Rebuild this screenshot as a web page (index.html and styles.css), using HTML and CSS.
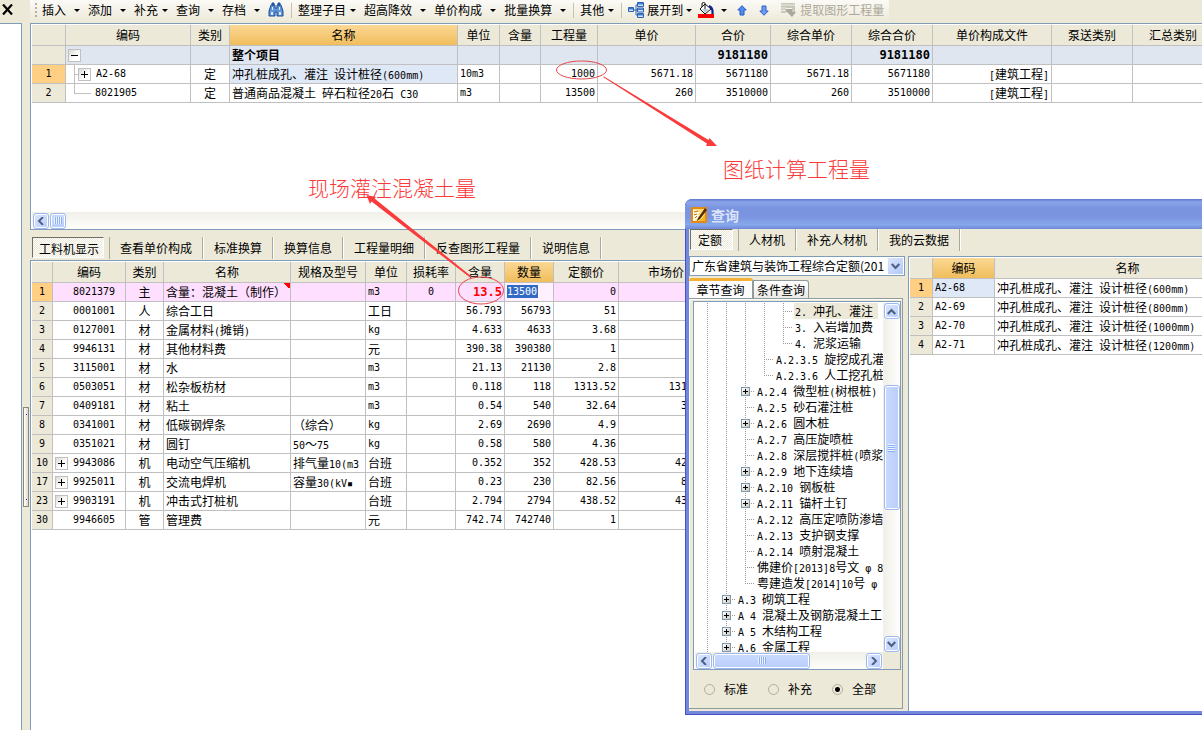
FILE: index.html
```html
<!DOCTYPE html>
<html lang="zh-CN">
<head>
<meta charset="utf-8">
<title>工程计价</title>
<link rel="stylesheet" href="styles.css">
</head>
<body>
<div class="app">
  <aside class="side">
    <div class="side-head"><button class="close" aria-label="关闭"><svg width="11" height="11" viewBox="0 0 11 11"><path d="M1 0.5L10 10.5M10 0.5L1 10.5" stroke="#000" stroke-width="2.2"/></svg></button></div>
    <div class="side-body"></div>
  </aside>
  <div class="splitter"><span class="handle"></span></div>
  <main class="main">
    <div class="toolbar">
      <span class="grip"></span>
      <button class="tb">插入<i class="caret"></i></button>
      <button class="tb">添加<i class="caret"></i></button>
      <button class="tb near">补充<i class="caret"></i></button>
      <button class="tb">查询<i class="caret"></i></button>
      <button class="tb">存档<i class="caret"></i></button>
      <button class="tb icon" aria-label="查找"><svg width="16" height="16" viewBox="0 0 16 16"><path d="M3 3h4v3h2V3h4l2 6v5h-6v-4H7v4H1V9z" fill="#5e93d8" stroke="#1b4f9c"/><path d="M4 1h2v2H4zM10 1h2v2h-2z" fill="#2c62b0" stroke="#1b4f9c"/><path d="M3 10h2v3H3zM11 10h2v3h-2zM4 5h1v3H4zM11 5h1v3h-1z" fill="#dcecff"/></svg></button>
      <span class="sep"></span>
      <button class="tb near">整理子目<i class="caret"></i></button>
      <button class="tb">超高降效<i class="caret"></i></button>
      <button class="tb">单价构成<i class="caret"></i></button>
      <button class="tb">批量换算<i class="caret"></i></button>
      <span class="sep"></span>
      <button class="tb near">其他<i class="caret"></i></button>
      <span class="sep"></span>
      <button class="tb near expand"><svg width="16" height="16" viewBox="0 0 16 16"><path d="M6 8h3M8 3v10M8 3h2M8 13h2M8 8h2" stroke="#3c6ab4" fill="none"/><path d="M.5 5.500h5v4h-5zM9.500.500h6v4h-6zM9.500 6h6v4h-6zM9.500 11.500h6v4h-6z" fill="#cfe2fb" stroke="#2f62b5"/><path d="M1 6h4v1.500H1zM10 1h5v1.500h-5zM10 6.500h5V8h-5zM10 12h5v1.500h-5z" fill="#3f7cd0"/></svg>展开到<i class="caret"></i></button>
      <button class="tb fill" aria-label="填充颜色"><svg width="16" height="16" viewBox="0 0 16 16"><path d="M0 12h16v4H0z" fill="#f00"/><path d="M7 2l6 5-6 5-5-5z" fill="#fff" stroke="#111"/><path d="M7 7V1.500q0-1-1.500-1T4 2v3" fill="none" stroke="#111"/><path d="M4 7h7l-4 4z" fill="#bcc7dc"/><path d="M11 4q4 1 3.500 8" fill="none" stroke="#0c1f9a" stroke-width="2.200"/></svg><i class="caret"></i></button>
      <button class="tb arrow" aria-label="上移"><svg width="10" height="11" viewBox="0 0 10 11"><path d="M5 .7L9.200 5H7v5H3V5H.8z" fill="#4f8df0" stroke="#2458c4"/></svg></button>
      <button class="tb arrow" aria-label="下移"><svg width="10" height="11" viewBox="0 0 10 11"><path d="M5 10.300L.8 6H3V1h4v5h2.200z" fill="#6b9cf2" stroke="#2e60c8"/></svg></button>
      <button class="tb extract" disabled><svg width="16" height="16" viewBox="0 0 16 16"><path d="M0 1h14v9h-3V6H5v5H0z" fill="#c9c7ba"/><path d="M0 3h14M0 6h5M0 8.500h5" stroke="#efede2"/><path d="M5 7h6v3h4l-4 5-5-5H5z" fill="#aaa89c"/></svg>提取图形工程量</button>
    </div>

    <section class="pane top">
      <div class="clip">
      <table class="grid t1">
        <colgroup><col class="c34"><col class="c125"><col class="c39"><col class="c228"><col class="c42"><col class="c41"><col class="c57"><col class="c98"><col class="c75"><col class="c81"><col class="c81"><col class="c119"><col class="c81"><col class="c81"></colgroup>
        <thead><tr><th></th><th>编码</th><th>类别</th><th class="hot">名称</th><th>单位</th><th>含量</th><th>工程量</th><th>单价</th><th>合价</th><th>综合单价</th><th>综合合价</th><th>单价构成文件</th><th>泵送类别</th><th>汇总类别</th></tr></thead>
        <tbody>
          <tr class="total"><th></th><td class="tree-cell"><button class="box minus" aria-label="折叠"></button></td><td></td><td>整个项目</td><td></td><td></td><td></td><td></td><td class="r big">9181180</td><td></td><td class="r big">9181180</td><td></td><td></td><td></td></tr>
          <tr><th class="hot n">1</th><td class="tree-cell"><span class="branch mid"></span><button class="box" aria-label="展开"></button><span class="n">A2-68</span></td><td class="c">定</td><td class="sel">冲孔桩成孔、灌注<span class="n">&nbsp;</span>设计桩径<span class="n">(600mm)</span></td><td class="n">10m3</td><td></td><td class="r n">1000</td><td class="r n">5671.18</td><td class="r n">5671180</td><td class="r n">5671.18</td><td class="r n">5671180</td><td class="r"><span class="n">[</span>建筑工程<span class="n">]</span></td><td></td><td></td></tr>
          <tr><th class="n">2</th><td class="tree-cell"><span class="branch end"></span><span class="n">8021905</span></td><td class="c">定</td><td>普通商品混凝土<span class="n">&nbsp;</span>碎石粒径<span class="n">20</span>石<span class="n">&nbsp;C30</span></td><td class="n">m3</td><td></td><td class="r n">13500</td><td class="r n">260</td><td class="r n">3510000</td><td class="r n">260</td><td class="r n">3510000</td><td class="r"><span class="n">[</span>建筑工程<span class="n">]</span></td><td></td><td></td></tr>
        </tbody>
      </table>
      </div>
      <div class="scroll-h"><button class="sb" aria-label="向左"><svg width="8" height="8" viewBox="0 0 8 8"><path d="M6 0L2 4l4 4" fill="none" stroke="#4d6185" stroke-width="2"/></svg></button><span class="thumb grips"></span></div>
    </section>

    <nav class="tabs">
      <button class="tab on">工料机显示</button><button class="tab">查看单价构成</button><button class="tab">标准换算</button><button class="tab">换算信息</button><button class="tab">工程量明细</button><button class="tab">反查图形工程量</button><button class="tab">说明信息</button>
    </nav>

    <section class="pane bottom">
      <table class="grid t2">
        <colgroup><col class="c21"><col class="c73"><col class="c38"><col class="c127"><col class="c75"><col class="c41"><col class="c49"><col class="c49"><col class="c49"><col class="c65"><col class="c95"></colgroup>
        <thead><tr><th></th><th>编码</th><th>类别</th><th>名称</th><th>规格及型号</th><th>单位</th><th>损耗率</th><th>含量</th><th class="hot">数量</th><th>定额价</th><th>市场价</th></tr></thead>
        <tbody>
          <tr class="pink"><th class="hot n">1</th><td class="code n">8021379</td><td class="c">主</td><td class="flag">含量：混凝土（制作）</td><td></td><td class="n">m3</td><td class="c n">0</td><td class="r alert">13.5</td><td class="edit"><input class="n" type="text" value="13500" aria-label="数量"></td><td class="r n">0</td><td></td></tr>
          <tr><th class="n">2</th><td class="code n">0001001</td><td class="c">人</td><td>综合工日</td><td></td><td>工日</td><td></td><td class="r n">56.793</td><td class="r n">56793</td><td class="r n">51</td><td></td></tr>
          <tr><th class="n">3</th><td class="code n">0127001</td><td class="c">材</td><td>金属材料<span class="n">(</span>摊销<span class="n">)</span></td><td></td><td class="n">kg</td><td></td><td class="r n">4.633</td><td class="r n">4633</td><td class="r n">3.68</td><td></td></tr>
          <tr><th class="n">4</th><td class="code n">9946131</td><td class="c">材</td><td>其他材料费</td><td></td><td>元</td><td></td><td class="r n">390.38</td><td class="r n">390380</td><td class="r n">1</td><td></td></tr>
          <tr><th class="n">5</th><td class="code n">3115001</td><td class="c">材</td><td>水</td><td></td><td class="n">m3</td><td></td><td class="r n">21.13</td><td class="r n">21130</td><td class="r n">2.8</td><td></td></tr>
          <tr><th class="n">6</th><td class="code n">0503051</td><td class="c">材</td><td>松杂板枋材</td><td></td><td class="n">m3</td><td></td><td class="r n">0.118</td><td class="r n">118</td><td class="r n">1313.52</td><td class="r n">1313.52</td></tr>
          <tr><th class="n">7</th><td class="code n">0409181</td><td class="c">材</td><td>粘土</td><td></td><td class="n">m3</td><td></td><td class="r n">0.54</td><td class="r n">540</td><td class="r n">32.64</td><td class="r n">32.64</td></tr>
          <tr><th class="n">8</th><td class="code n">0341001</td><td class="c">材</td><td>低碳钢焊条</td><td>（综合）</td><td class="n">kg</td><td></td><td class="r n">2.69</td><td class="r n">2690</td><td class="r n">4.9</td><td></td></tr>
          <tr><th class="n">9</th><td class="code n">0351021</td><td class="c">材</td><td>圆钉</td><td><span class="n">50</span>～<span class="n">75</span></td><td class="n">kg</td><td></td><td class="r n">0.58</td><td class="r n">580</td><td class="r n">4.36</td><td></td></tr>
          <tr><th class="n">10</th><td class="code n"><button class="box" aria-label="展开"></button>9943086</td><td class="c">机</td><td>电动空气压缩机</td><td>排气量<span class="n">10(m3</span></td><td>台班</td><td></td><td class="r n">0.352</td><td class="r n">352</td><td class="r n">428.53</td><td class="r n">428.53</td></tr>
          <tr><th class="n">17</th><td class="code n"><button class="box" aria-label="展开"></button>9925011</td><td class="c">机</td><td>交流电焊机</td><td>容量<span class="n">30(kV▪</span></td><td>台班</td><td></td><td class="r n">0.23</td><td class="r n">230</td><td class="r n">82.56</td><td class="r n">82.56</td></tr>
          <tr><th class="n">23</th><td class="code n"><button class="box" aria-label="展开"></button>9903191</td><td class="c">机</td><td>冲击式打桩机</td><td></td><td>台班</td><td></td><td class="r n">2.794</td><td class="r n">2794</td><td class="r n">438.52</td><td class="r n">438.52</td></tr>
          <tr><th class="n">30</th><td class="code n">9946605</td><td class="c">管</td><td>管理费</td><td></td><td>元</td><td></td><td class="r n">742.74</td><td class="r n">742740</td><td class="r n">1</td><td></td></tr>
        </tbody>
      </table>
    </section>
  </main>
</div>

<svg class="marks" width="720" height="310" viewBox="0 0 720 310" aria-hidden="true">
  <g fill="none" stroke="#e8454a" stroke-width="1"><ellipse cx="581.500" cy="70" rx="25" ry="9"/><ellipse cx="481" cy="290.500" rx="22.500" ry="13.500"/></g>
  <path d="M603 77L604 76.500L708.500 140L709.500 138L717 146L706 146L707 143.500z" fill="#fb3b3b"/>
  <path d="M471.500 276.500L470 277.500L371.500 201.500L370 204L366.500 195L376 197L374.500 198.500z" fill="#fb3b3b"/>
</svg>
<span class="note note-site">现场灌注混凝土量</span>
<span class="note note-draw">图纸计算工程量</span>

<div class="dialog" role="dialog" aria-label="查询">
  <header class="title"><svg width="16" height="16" viewBox="0 0 16 16"><path d="M0 0h16v16H0z" fill="#e28a12"/><path d="M2 2h12v12H2z" fill="#ffdf78"/><path d="M2 3h4v2h3l-3 3h3l-5 6H2z" fill="#fffbe8"/><path d="M3 5l4-1M3 8l3-1M4 11l2-2" stroke="#b56a0a"/><path d="M14 1L7 11l-1 3 3-2 7-9z" fill="#5a2c04"/><path d="M8 14q4-3 6-7v7z" fill="#f6b52f"/></svg><span>查询</span></header>
  <div class="content">
    <nav class="tabs sub"><button class="tab on">定额</button><button class="tab">人材机</button><button class="tab">补充人材机</button><button class="tab">我的云数据</button></nav>
    <div class="cols">
      <div class="left">
        <div class="combo"><select aria-label="定额库"><option>广东省建筑与装饰工程综合定额(201</option></select><span class="drop"><svg width="9" height="7" viewBox="0 0 9 7"><path d="M.7 1l3.800 4L8.300 1" fill="none" stroke="#4d6185" stroke-width="2.200"/></svg></span></div>
        <div class="ptabs"><button class="ptab on">章节查询</button><button class="ptab">条件查询</button></div>
        <div class="page">
          <div class="treebox">
            <div class="tree">
              <div class="row"><i class="g"></i><i class="g"></i><i class="g"></i><i class="g"></i><i class="g t"></i><span class="pick"><b>2.&nbsp;</b>冲孔、灌注</span></div>
              <div class="row"><i class="g"></i><i class="g"></i><i class="g"></i><i class="g"></i><i class="g t"></i><span><b>3.&nbsp;</b>入岩增加费</span></div>
              <div class="row"><i class="g"></i><i class="g"></i><i class="g"></i><i class="g"></i><i class="l"></i><span><b>4.&nbsp;</b>泥浆运输</span></div>
              <div class="row"><i class="g"></i><i class="g"></i><i class="g"></i><i class="g t"></i><span><b>A.2.3.5&nbsp;</b>旋挖成孔灌</span></div>
              <div class="row"><i class="g"></i><i class="g"></i><i class="g"></i><i class="l"></i><span><b>A.2.3.6&nbsp;</b>人工挖孔桩</span></div>
              <div class="row"><i class="g"></i><i class="g"></i><i class="g t"><button class="plus" aria-label="展开"></button></i><span><b>A.2.4&nbsp;</b>微型桩<b>(</b>树根桩<b>)</b></span></div>
              <div class="row"><i class="g"></i><i class="g"></i><i class="g t"></i><span><b>A.2.5&nbsp;</b>砂石灌注桩</span></div>
              <div class="row"><i class="g"></i><i class="g"></i><i class="g t"><button class="plus" aria-label="展开"></button></i><span><b>A.2.6&nbsp;</b>圆木桩</span></div>
              <div class="row"><i class="g"></i><i class="g"></i><i class="g t"></i><span><b>A.2.7&nbsp;</b>高压旋喷桩</span></div>
              <div class="row"><i class="g"></i><i class="g"></i><i class="g t"></i><span><b>A.2.8&nbsp;</b>深层搅拌桩<b>(</b>喷浆</span></div>
              <div class="row"><i class="g"></i><i class="g"></i><i class="g t"><button class="plus" aria-label="展开"></button></i><span><b>A.2.9&nbsp;</b>地下连续墙</span></div>
              <div class="row"><i class="g"></i><i class="g"></i><i class="g t"><button class="plus" aria-label="展开"></button></i><span><b>A.2.10&nbsp;</b>钢板桩</span></div>
              <div class="row"><i class="g"></i><i class="g"></i><i class="g t"><button class="plus" aria-label="展开"></button></i><span><b>A.2.11&nbsp;</b>锚杆土钉</span></div>
              <div class="row"><i class="g"></i><i class="g"></i><i class="g t"></i><span><b>A.2.12&nbsp;</b>高压定喷防渗墙</span></div>
              <div class="row"><i class="g"></i><i class="g"></i><i class="g t"></i><span><b>A.2.13&nbsp;</b>支护钢支撑</span></div>
              <div class="row"><i class="g"></i><i class="g"></i><i class="g t"></i><span><b>A.2.14&nbsp;</b>喷射混凝土</span></div>
              <div class="row"><i class="g"></i><i class="g"></i><i class="g t"></i><span>佛建价<b>[2013]8</b>号文<b>&nbsp;φ&nbsp;8</b></span></div>
              <div class="row"><i class="g"></i><i class="g"></i><i class="l"></i><span>粤建造发<b>[2014]10</b>号<b>&nbsp;φ</b></span></div>
              <div class="row"><i class="g"></i><i class="g t"><button class="plus" aria-label="展开"></button></i><span><b>A.3&nbsp;</b>砌筑工程</span></div>
              <div class="row"><i class="g"></i><i class="g t"><button class="plus" aria-label="展开"></button></i><span><b>A&nbsp;4&nbsp;</b>混凝土及钢筋混凝土工</span></div>
              <div class="row"><i class="g"></i><i class="g t"><button class="plus" aria-label="展开"></button></i><span><b>A&nbsp;5&nbsp;</b>木结构工程</span></div>
              <div class="row"><i class="g"></i><i class="g t"><button class="plus" aria-label="展开"></button></i><span><b>A.6&nbsp;</b>金属工程</span></div>
            </div>
            <div class="scroll-v"><button class="sb" aria-label="向上"><svg width="9" height="7" viewBox="0 0 9 7"><path d="M.7 6l3.800-4L8.300 6" fill="none" stroke="#4d6185" stroke-width="2.200"/></svg></button><span class="space-a"></span><span class="thumb"></span><span class="space-b"></span><button class="sb" aria-label="向下"><svg width="9" height="7" viewBox="0 0 9 7"><path d="M.7 1l3.800 4L8.300 1" fill="none" stroke="#4d6185" stroke-width="2.200"/></svg></button></div>
            <div class="scroll-h"><button class="sb" aria-label="向左"><svg width="8" height="8" viewBox="0 0 8 8"><path d="M6 0L2 4l4 4" fill="none" stroke="#4d6185" stroke-width="2"/></svg></button><span class="thumb grips wide"></span><button class="sb last" aria-label="向右"><svg width="8" height="8" viewBox="0 0 8 8"><path d="M2 0l4 4-4 4" fill="none" stroke="#4d6185" stroke-width="2"/></svg></button></div>
          </div>
          <div class="radios"><label><input type="radio" name="scope">标准</label><label><input type="radio" name="scope">补充</label><label><input type="radio" name="scope" checked>全部</label></div>
        </div>
      </div>
      <div class="result">
        <table class="grid t3">
          <colgroup><col class="c23"><col class="c62"><col class="c266"></colgroup>
          <thead><tr><th></th><th class="hot">编码</th><th>名称</th></tr></thead>
          <tbody>
            <tr><th class="hot n">1</th><td class="sel n">A2-68</td><td>冲孔桩成孔、灌注<span class="n">&nbsp;</span>设计桩径<span class="n">(600mm)</span></td></tr>
            <tr><th class="n">2</th><td class="n">A2-69</td><td>冲孔桩成孔、灌注<span class="n">&nbsp;</span>设计桩径<span class="n">(800mm)</span></td></tr>
            <tr><th class="n">3</th><td class="n">A2-70</td><td>冲孔桩成孔、灌注<span class="n">&nbsp;</span>设计桩径<span class="n">(1000mm)</span></td></tr>
            <tr><th class="n">4</th><td class="n">A2-71</td><td>冲孔桩成孔、灌注<span class="n">&nbsp;</span>设计桩径<span class="n">(1200mm)</span></td></tr>
          </tbody>
        </table>
      </div>
    </div>
  </div>
</div>
</body>
</html>
```
FILE: styles.css
```css
* { box-sizing: border-box; }
html, body { height: 100%; margin: 0; overflow: hidden; }
body {
  position: relative;
  background: #ece9d8;
  color: #000;
  font: 12px/18px "Noto Sans CJK SC", "Liberation Sans", sans-serif;
}
button, input, select { font: inherit; color: inherit; margin: 0; padding: 0; border: 0; background: none; border-radius: 0; }
svg { display: block; flex: none; }
i, b { font-style: normal; font-weight: normal; }
.n, .tree b { font-family: "DejaVu Sans Mono", "Noto Sans CJK SC", monospace; font-size: 10px; font-weight: normal; }
span.n, .tree b { line-height: 10px; }

.app { display: flex; height: 100%; }
.side { flex: 0 0 22px; display: flex; flex-direction: column; }
.side-head { height: 23px; padding: 4px 0 0 2px; }
.close { display: block; }
.side-body { flex: 1; background: #fff; border-top: 1px solid #7f9db9; border-right: 1px solid #7f9db9; }
.splitter { flex: 0 0 8px; display: flex; justify-content: center; padding-top: 407px; }
.handle { width: 6px; height: 100px; border: 1px solid #8a887c; background: linear-gradient(#22c, #22c) 2px 6px / 1px 1px no-repeat, linear-gradient(#22c, #22c) 2px 91px / 1px 1px no-repeat, linear-gradient(90deg, #fff, #dedbca); }
.main { flex: 1; min-width: 0; display: flex; flex-direction: column; }

.toolbar { display: flex; align-items: center; height: 23px; padding: 0 0 3px 5px; white-space: nowrap; align-self: flex-start; background: linear-gradient(#fbfaf6, #ece9d8); }
.grip { width: 2px; height: 14px; margin-right: 5px; background: repeating-linear-gradient(#b4b1a2 0 2px, transparent 2px 4px); }
.tb { display: flex; align-items: center; gap: 8px; margin-right: 8px; }
.tb.near { gap: 4px; }
.tb:disabled { color: #aca899; gap: 3px; margin-right: 5px; }
.tb.icon { margin-right: 8px; }
.tb.near.expand { gap: 3px; margin-right: 6px; }
.tb.fill { gap: 7px; margin-right: 10px; }
.tb.arrow { margin-right: 12px; }
.caret { border: 3px solid transparent; border-top-color: #000; border-bottom: 0; }
.sep { width: 1px; height: 15px; margin-right: 6px; background: #c5c2b2; }
.tb + .sep { margin-left: -1px; }

.pane { border: 1px solid #7f9db9; border-right: 0; background: #fff; padding: 1px 0 0 1px; overflow: hidden; }
.top { flex: 0 0 207px; display: flex; flex-direction: column; }
.clip { flex: 1; overflow: hidden; }
.bottom { flex: 1; min-height: 0; border-bottom: 0; }

.grid { table-layout: fixed; border-collapse: separate; border-spacing: 0; }
.t1 { width: 1182px; }
.t2 { width: 682px; }
.t3 { width: 351px; }
.c21 { width: 21px; } .c23 { width: 23px; } .c34 { width: 34px; } .c38 { width: 38px; } .c39 { width: 39px; }
.c41 { width: 41px; } .c42 { width: 42px; } .c49 { width: 49px; } .c57 { width: 57px; } .c62 { width: 62px; }
.c65 { width: 65px; } .c73 { width: 73px; } .c75 { width: 75px; } .c81 { width: 81px; } .c95 { width: 95px; }
.c98 { width: 98px; } .c119 { width: 119px; } .c125 { width: 125px; } .c127 { width: 127px; } .c228 { width: 228px; } .c266 { width: 266px; }
.grid th, .grid td { height: 19px; padding: 0 2px; line-height: 16px; border: solid #c0c0c0; border-width: 0 1px 1px 0; white-space: nowrap; overflow: hidden; text-align: left; vertical-align: middle; }
.grid th { background: #ece9d8; text-align: center; font-weight: normal; }
.grid thead th { height: 21px; line-height: 20px; padding: 0; }
.grid thead .hot { background: linear-gradient(#fbd894, #f0bd5c); }
.grid tbody .hot { background: #ffd083; }
.grid .c { text-align: center; }
.grid .r { text-align: right; }
.grid .sel { background: #dfe8f6; }
.grid .total td { background: #dfe6f0; font-weight: bold; }
.grid .big, .grid .alert { font: bold 12px/16px "DejaVu Sans Mono", monospace; }
.grid .pink td { background: #ffdfff; }
.grid td.code { padding-left: 20px; }
.grid td.code .box { margin: 0 5px 0 -18px; }
.grid .alert { color: #f00; }
.grid .pink .edit { background: #fff0ff; vertical-align: top; }
.grid .pink td.flag { background: linear-gradient(45deg, transparent 50%, #f00 50%) top right / 6px 6px no-repeat #ffdfff; }
.edit input { display: block; width: 31px; height: 13px; margin-top: 2px; line-height: 13px; background: #316ac5; color: #fff; }

.box { display: inline-block; width: 13px; height: 13px; vertical-align: middle; border: 1px solid #c0c0c0;
  background: linear-gradient(#000, #000) 2px 5px / 7px 1px no-repeat, linear-gradient(#000, #000) 5px 2px / 1px 7px no-repeat, linear-gradient(135deg, #d8d8d4, #fff 60%); }
.box.minus { background: linear-gradient(#000, #000) 2px 5px / 7px 1px no-repeat, linear-gradient(135deg, #d8d8d4, #fff 60%); }
.grid .tree-cell { line-height: 0; }
.tree-cell > * { vertical-align: middle; }
.tree-cell .box { margin-right: 5px; }
.branch { display: inline-block; height: 18px; margin-left: 6px; }
.branch.mid { width: 6px; background: linear-gradient(#c0c0c0, #c0c0c0) 0 9px / 100% 1px no-repeat, linear-gradient(#c0c0c0, #c0c0c0) 0 0 / 1px 18px no-repeat; }
.branch.end { width: 17px; margin-right: 4px; background: linear-gradient(#c0c0c0, #c0c0c0) 0 9px / 100% 1px no-repeat, linear-gradient(#c0c0c0, #c0c0c0) 0 0 / 1px 9px no-repeat; }
.branch.mid + .box { margin-left: -2px; }

.scroll-h { display: flex; gap: 1px; height: 17px; padding: 0 1px; align-items: center; background: linear-gradient(#f0efe8, #fefefc); }
.sb, .thumb { width: 16px; height: 16px; flex: none; border: 1px solid #9db8ee; border-radius: 3px; box-shadow: inset 0 0 0 1px #fff; background: linear-gradient(135deg, #dbe6fe, #b9cdfb); }
.sb svg { margin: auto; }
.grips { background: repeating-linear-gradient(90deg, #eef4fe 0 1px, #8cb0f8 1px 2px) center / 8px 7px no-repeat, linear-gradient(#cbdafd, #b9cdfb); }

.tabs { display: flex; align-items: flex-start; padding: 7px 0 0 2px; height: 30px; flex: none; white-space: nowrap; }
.tab { height: 22px; line-height: 20px; padding: 0 10px; border-right: 1px solid #aca899; box-shadow: 1px 0 #fff; margin-right: 1px; }
.tab.on { height: 21px; padding: 2px 4px 0 6px; line-height: 18px; margin-right: 5px; border: 1px solid; border-color: #716f64 #fff #fff #716f64; box-shadow: none; background: repeating-conic-gradient(#fff 0 25%, #ece9d8 0 50%) 0 0 / 2px 2px; }
.tab.on + .tab { border-left: 1px solid #aca899; }

.marks { position: absolute; left: 0; top: 0; pointer-events: none; }
.note { position: absolute; font-size: 21px; line-height: 24px; color: #fb3b3b; white-space: nowrap; font-weight: 300; }
.note-site { left: 308px; top: 175px; }
.note-draw { left: 723px; top: 156px; }

.dialog { position: absolute; left: 685px; right: 0; top: 199px; display: flex; flex-direction: column; height: 516px; padding: 0 0 4px 4px; overflow: hidden; border-radius: 7px 0 0 0; background: #7288dc; box-shadow: inset 1px -1px #4a4fc4; }
.title { flex: 0 0 30px; display: flex; align-items: center; gap: 4px; margin-left: -4px; padding: 2px 0 0 6px; color: #dbe4f8; font-size: 14px; font-weight: bold; background: linear-gradient(#5b78cc, #8ba5ea 10%, #7b94e0 30%, #7b94e0 60%, #86a8ec 85%, #7088d8); }
.content { flex: 1; min-height: 0; display: flex; flex-direction: column; background: #ece9d8; }
.tabs.sub { padding: 0 0 0 1px; height: 27px; }
.sub .tab.on { padding: 1px 10px 0 7px; }
.cols { flex: 1; min-height: 0; display: flex; gap: 3px; }
.left { flex: 0 0 216px; min-width: 0; width: 216px; display: flex; flex-direction: column; }
.combo { display: flex; height: 20px; margin-bottom: 2px; padding: 1px; border: 1px solid #7f9db9; background: #fff; }
.combo select { appearance: none; flex: 1; min-width: 0; padding-left: 1px; line-height: 16px; overflow: hidden; }
.drop { flex: none; display: flex; align-items: center; justify-content: center; width: 15px; background: linear-gradient(135deg, #dbe6fe, #b1c8f8); }
.ptabs { display: flex; align-items: flex-end; height: 20px; }
.ptab { height: 18px; line-height: 16px; width: 56px; border: 1px solid #919b9c; border-bottom: 0; border-radius: 0 3px 0 0; background: linear-gradient(#fff, #ecebe6); }
.ptab.on { height: 20px; width: 64px; line-height: 17px; border-left: 0; border-top: 3px solid #f5b135; border-radius: 3px 3px 0 0; background: #fcfcfe; }
.page { flex: 1; min-height: 0; display: flex; flex-direction: column; width: 214px; margin-bottom: 2px; padding: 2px 1px 0 4px; border: 1px solid #919b9c; border-left: 0; box-shadow: inset 1px 1px #fff; }
.treebox { flex: 1; min-height: 0; display: grid; grid-template: minmax(0, 1fr) 17px / minmax(0, 1fr) 17px; padding: 1px 0 0 1px; border: 1px solid #7f9db9; background: linear-gradient(#ece9d8, #ece9d8) bottom right / 17px 17px no-repeat #fff; }
.tree { overflow: hidden; padding-left: 3px; }
.row { display: flex; height: 16px; line-height: 16px; white-space: nowrap; }
.row > span { margin-left: 1px; padding-left: 1px; }
.row .pick { padding-right: 5px; background: #ece9d8; }
.row i { flex: 0 0 19px; height: 16px; --v: repeating-linear-gradient(#999 0 1px, transparent 1px 2px); --h: repeating-linear-gradient(90deg, #999 0 1px, transparent 1px 2px); }
.row .g { background: var(--v) 9px 0 / 1px 100% no-repeat; }
.row .t { background: var(--v) 9px 0 / 1px 100% no-repeat, var(--h) 9px 8px / 9px 1px no-repeat; }
.row .l { background: var(--v) 9px 0 / 1px 8px no-repeat, var(--h) 9px 8px / 9px 1px no-repeat; }
.plus { display: block; width: 9px; height: 9px; margin: 4px 5px; border: 1px solid #7898b5;
  background: linear-gradient(#000, #000) 1px 3px / 5px 1px no-repeat, linear-gradient(#000, #000) 3px 1px / 1px 5px no-repeat, linear-gradient(135deg, #fff, #cfc9ba); }
.scroll-v { display: flex; flex-direction: column; align-items: center; background: linear-gradient(90deg, #f0efe8, #fefefc); }
.space-a { flex: 66; }
.space-b { flex: 126; }
.scroll-v .thumb { flex: 124; background: repeating-linear-gradient(#eef4fe 0 1px, #8cb0f8 1px 2px) center / 7px 8px no-repeat, linear-gradient(90deg, #cbdafd, #b9cdfb); }
.scroll-h .wide { width: 97px; }
.scroll-h .last { margin-left: auto; }
.radios { flex: 0 0 38px; display: flex; align-items: center; gap: 20px; padding-left: 11px; }
.radios label { display: flex; align-items: center; gap: 9px; }
.radios input { appearance: none; width: 11px; height: 11px; border: 1px solid #b0ad9e; border-radius: 50%; }
.radios input:checked { background: radial-gradient(#000 2px, transparent 3px); }
.result { flex: 1; min-width: 0; overflow: hidden; padding: 1px 0 0 1px; border: solid #7f9db9; border-width: 1px 0 0 1px; background: #fff; }
```
